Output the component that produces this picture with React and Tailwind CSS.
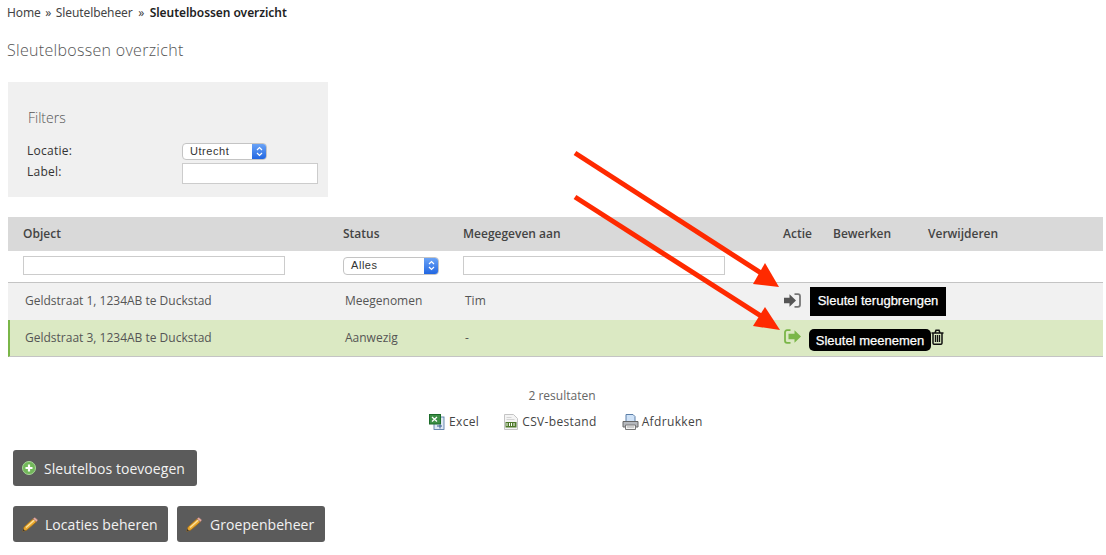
const cols = "grid grid-cols-[320px_120px_320px_50px_95px_1fr] pl-[15px]";

function SelectBox({ label, className }) {
  return (
    <div className={`flex items-stretch rounded-[4px] bg-white border border-[#c4c4c4] overflow-hidden ${className}`}>
      <span className="flex-1 pl-[7px] text-[11px] leading-[15px] tracking-[0.55px] text-[#333] font-['Liberation_Sans',sans-serif]">{label}</span>
      <span className="w-[15px] -my-px -mr-px bg-gradient-to-b from-[#6ea6f7] to-[#1c62e0] flex items-center justify-center">
        <svg width="7" height="11" viewBox="0 0 7 11" fill="none" stroke="#fff" strokeWidth="1.2">
          <path d="M1 4 3.5 1.5 6 4M1 7l2.5 2.5L6 7" />
        </svg>
      </span>
    </div>
  );
}

function SignIn() {
  return (
    <svg width="17" height="15" viewBox="0 0 17 15">
      <path d="M0 4.800h5.500V1.300L12 7.500 5.500 13.700V10.200H0z" fill="#555" />
      <path d="M10.500 1.200h3.500a2 2 0 0 1 2 2v8.600a2 2 0 0 1-2 2h-3.500" fill="none" stroke="#777" strokeWidth="1.800" />
    </svg>
  );
}

function SignOut() {
  return (
    <svg width="17" height="15" viewBox="0 0 17 15">
      <path d="M6.500 1.200H3a2 2 0 0 0-2 2v8.600a2 2 0 0 0 2 2h3.500" fill="none" stroke="#7ab648" strokeWidth="1.800" />
      <path d="M4.500 4.800H10.500V1.300L17 7.500 10.500 13.700V10.200H4.500z" fill="#7ab648" />
    </svg>
  );
}

function Trash() {
  return (
    <svg width="13" height="16" viewBox="0 0 13 16" fill="none" stroke="#111" strokeWidth="1.500">
      <path d="M.5 4h12M4 4 5 1.200h3L9 4" />
      <path d="M2 4v10a1.300 1.300 0 0 0 1.300 1.300h6.400A1.300 1.300 0 0 0 11 14V4" />
      <path d="M4.500 6V13M6.500 6V13M8.500 6V13" strokeWidth="1.300" />
    </svg>
  );
}

function ExcelIcon() {
  return (
    <svg width="16" height="16" viewBox="0 0 16 16">
      <rect x="5" y="3" width="10" height="12.500" fill="#dfe9f5" stroke="#4a6f9e" strokeWidth="0.800" />
      <rect x="0.500" y="0.500" width="11" height="9.500" fill="#3c8f45" stroke="#1c6b2a" />
      <path d="M3 3l5 4.500M8 3 3 7.500" stroke="#fff" strokeWidth="1.300" />
      <path d="M8 12h5M11 10.500v4" stroke="#3a5d8c" strokeWidth="1" />
    </svg>
  );
}

function CsvIcon() {
  return (
    <svg width="14" height="16" viewBox="0 0 14 16">
      <path d="M.5.500h9l4 4v11H.5z" fill="#f4f4f4" stroke="#c4c4c4" />
      <path d="M2.500 3.500h5M2.500 5.500h8" stroke="#d4d4d4" />
      <rect x="1.500" y="8" width="11" height="5.500" fill="#4f7a2b" />
      <path d="M3 9v3M5.500 9v3M7.500 9v3M10 9v3" stroke="#fff" strokeWidth="1" />
    </svg>
  );
}

function PrintIcon() {
  return (
    <svg width="17" height="16" viewBox="0 0 17 16">
      <path d="M4 .500h7l2 2v5H4z" fill="#cfe2f7" stroke="#5c7fa8" />
      <path d="M1 7.500h15v5.500H1z" fill="#b5b8bd" stroke="#666" />
      <path d="M3.500 11h10v4.500h-10z" fill="#f2f2f2" stroke="#777" />
      <path d="M5 13h7" stroke="#aaa" />
    </svg>
  );
}

function PlusIcon() {
  return (
    <svg width="14" height="14" viewBox="0 0 14 14">
      <circle cx="7" cy="7" r="6.500" fill="#72b85a" stroke="#a9d79b" />
      <path d="M7 3.500v7M3.500 7h7" stroke="#fff" strokeWidth="2.200" />
    </svg>
  );
}

function PencilIcon() {
  return (
    <svg width="16" height="15" viewBox="0 0 16 15">
      <path d="M.8 14.200 2 10 11 1.800 14.500 4.800 5 13z" fill="#eaa92f" stroke="#9a6a1c" strokeWidth="0.800" />
      <path d="M4 10.500 12.500 3" stroke="#fbe3a0" strokeWidth="1.200" />
      <path d="M11 1.800 12.800.5 15.700 3 14.500 4.800z" fill="#e7b0a8" stroke="#a5736c" strokeWidth="0.500" />
      <path d="M.8 14.200 1.400 12 3 13.500z" fill="#333" />
    </svg>
  );
}

function DarkButton({ icon, label, className }) {
  return (
    <button className={`h-9 rounded-[3px] bg-[#5b5b5b] text-[#f2f2f2] text-[14px] tracking-[0.05px] flex items-center ${className}`}>
      {icon}
      {label}
    </button>
  );
}

export default function App() {
  return (
    <div className="relative w-[1106px] h-[555px] overflow-hidden bg-white font-['Open_Sans',sans-serif] text-[#555]">
      <div className="px-2">
        <nav className="pt-[5px] h-[35px] -ml-px text-[12px] leading-[16px] tracking-[-0.1px] text-[#444] font-['Noto_Sans',sans-serif]">
          Home <span className="mx-[1.5px]">»</span> Sleutelbeheer <span className="mx-[2.5px]">»</span>{" "}
          <b className="font-semibold text-[#222] tracking-[-0.05px]">Sleutelbossen overzicht</b>
        </nav>
        <h1 className="h-[47px] pt-[4px] -ml-px text-[16px] leading-[22px] font-light tracking-[0.3px] text-[#555]">Sleutelbossen overzicht</h1>

        <section className="w-[320px] h-[115px] bg-[#f0f0f0] pl-5 pr-[10px] pt-[26px]">
          <h2 className="text-[14px] leading-[20px] font-light text-[#555] mb-[14px]">Filters</h2>
          <div className="grid grid-cols-[155px_1fr] -ml-px text-[12px] tracking-[0.25px] text-[#333]">
            <label className="leading-[17px]">Locatie:</label>
            <SelectBox label="Utrecht" className="w-[85px] h-[17px] mt-[1px]" />
            <label className="leading-[20px] mt-[2px]">Label:</label>
            <input className="w-[136px] h-[21px] mt-[3px] bg-white border border-[#ccc]" />
          </div>
        </section>

        <section className="mt-5 w-[1095px]">
          <div className={`${cols} h-[34px] items-center bg-[#d9d9d9] text-[12px] font-semibold text-[#444]`}>
            <span>Object</span>
            <span>Status</span>
            <span>Meegegeven aan</span>
            <span>Actie</span>
            <span>Bewerken</span>
            <span>Verwijderen</span>
          </div>
          <div className={`${cols} h-[32px] items-center border-b border-[#c4c4c4] pb-[2px]`}>
            <input className="w-[262px] h-[19px] bg-white border border-[#ccc]" />
            <SelectBox label="Alles" className="w-[96px] h-[18px]" />
            <input className="w-[262px] h-[19px] bg-white border border-[#ccc]" />
          </div>
          <div className={`${cols} h-[37px] items-center bg-[#f1f1f1] text-[12px] text-[#555] pb-[2px]`}>
            <span className="pl-[2px]">Geldstraat 1, 1234AB te Duckstad</span>
            <span className="pl-[2px]">Meegenomen</span>
            <span className="pl-[2px]">Tim</span>
            <span className="flex pl-[1px] -mt-[1px]"><SignIn /></span>
          </div>
          <div className={`${cols} h-[37px] items-center bg-[#dbe9c3] text-[12px] text-[#555] border-b border-[#c4c4c4] border-l-2 border-l-[#7ab648] !pl-[13px]`}>
            <span className="pl-[2px]">Geldstraat 3, 1234AB te Duckstad</span>
            <span className="pl-[2px]">Aanwezig</span>
            <span className="pl-[2px]">-</span>
            <span className="flex pl-[1px] -mt-[3px]"><SignOut /></span>
            <span />
            <span className="flex ml-[3px] -mt-[3px]"><Trash /></span>
          </div>
        </section>

        <div className="mt-[30px] pl-[18px] text-center text-[12px] leading-[18px] text-[#666]">2 resultaten</div>
        <div className="mt-[8px] ml-[421px] h-[18px] flex text-[12px] tracking-[0.35px] leading-[18px] text-[#444]">
          <span className="flex items-center gap-[4px]"><ExcelIcon />Excel</span>
          <span className="flex items-center gap-[4px] ml-[25px]"><CsvIcon />CSV-bestand</span>
          <span className="flex items-center gap-[3px] ml-[25px]"><PrintIcon />Afdrukken</span>
        </div>

        <div className="mt-[19px] ml-[5px]">
          <DarkButton icon={<PlusIcon />} label="Sleutelbos toevoegen" className="w-[184px] pl-[9px] gap-[8px]" />
          <div className="mt-5 flex gap-[9px]">
            <DarkButton icon={<PencilIcon />} label="Locaties beheren" className="w-[155px] pl-[9px] gap-[7px]" />
            <DarkButton icon={<PencilIcon />} label="Groepenbeheer" className="w-[148px] pl-[9px] gap-[8px]" />
          </div>
        </div>
      </div>

      {/* tooltips over the action column */}
      <div className="absolute left-[810px] top-[287px] w-[136px] h-[29px] bg-black text-white text-[13px] leading-[28px] text-center [-webkit-text-stroke:0.25px_white] font-['Liberation_Sans',sans-serif]">
        Sleutel terugbrengen
      </div>
      <div className="absolute left-[809px] top-[329px] w-[122px] h-[22px] rounded-[5px] bg-black text-white text-[13px] leading-[23px] text-center [-webkit-text-stroke:0.25px_white] font-['Liberation_Sans',sans-serif]">
        Sleutel meenemen
      </div>

      {/* annotation arrows drawn on top of the screenshot */}
      <svg className="absolute inset-0 pointer-events-none" width="1106" height="555">
        <path d="M575 153 764 275" stroke="#ff2a00" strokeWidth="5" />
        <path d="M779 287 765 263 753 284z" fill="#ff2a00" />
        <path d="M575 197 764 318" stroke="#ff2a00" strokeWidth="5" />
        <path d="M780 330 765 307 753 326z" fill="#ff2a00" />
      </svg>
    </div>
  );
}
